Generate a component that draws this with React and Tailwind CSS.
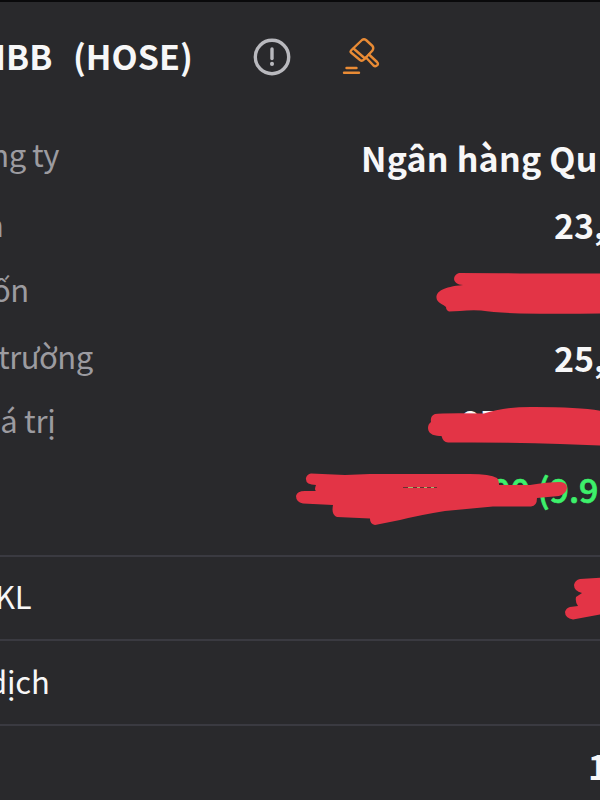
import React from 'react';
import clsx from 'clsx';

const infoRows = [
  {
    label: 'ông ty',
    labelClass: '-ml-[28px] -mt-[3px]',
    value: 'Ngân hàng Qu',
    valueClass: 'w-[239px] mt-px tracking-[0.2px]',
  },
  { label: 'n', labelClass: '-ml-[15px] mt-px', value: '23,', valueClass: 'w-[46px] mt-[2px]' },
  {
    label: 'ốn',
    labelClass: '-ml-[8px]',
    scribble:
      'M459 17 Q500 17 520 17.500 L602 17.500 L602 57.500 Q560 58 520 57.500 Q495 56.500 481 54.500 Q470 54 460 55 L449 55.500 Q446 54 446 51 C443 48 437 47 436.500 42 C436 36 442 31 463 29 C453 29 451 20 459 17 Z',
  },
  { label: 'trường', labelClass: '-ml-[2px] mt-px', value: '25,', valueClass: 'w-[46px] mt-[3px]' },
  {
    label: 'iá trị',
    labelClass: '-ml-[8px] -mt-px tracking-[-0.3px]',
    value: '97',
    valueClass: 'w-[139px] mt-px',
    scribble:
      'M435 26 Q440 25 484 25.500 Q505 18.500 535 19 Q580 19 602 23 L602 57.500 L560 56 Q510 54 448 54.500 Q443 54 441.500 48 C436 48 428 47 428 40 Q428 36 431 34 Q430 28 435 26 Z',
  },
  {
    label: '',
    value: '00 (9.9',
    gain: true,
    valueClass: 'w-[109px] mt-[2px]',
    scribble:
      'M311 19.500 L345 21 L370 20 L470 20 Q490 20 497 24 Q499 26 499 31 L530 31 Q547 28 561 28 Q567 29 567 34 Q566 40 559 42 L537 44 Q537 52 531 52.500 L493 52.500 L445 57 Q420 61 400 66 L375 71 Q370 70 370 65 L370 64.500 L337 63 Q331 61 333 51 L303 49.500 Q296 48 296 42 Q297 37 305 37 L316 37 Q314 36 316 31 Q305 31 306 24 Q307 20 311 19.500 Z',
  },
];

function Scribble({ d, gap }) {
  return (
    <svg className="absolute inset-0 h-full w-full overflow-visible" fill="#e33446" viewBox="0 0 600 66">
      <path d={d} />
      {gap && (
        <>
          <path d="M403 33.500 H437" stroke="#6d2f33" strokeWidth="1" />
          <path d="M408 33.500 H413 M417 33.500 H420 M424 33.500 H427 M431 33.500 H434" stroke="#a8b46c" strokeWidth="1" />
        </>
      )}
    </svg>
  );
}

function InfoRow({ label, labelClass, value, valueClass, gain, scribble }) {
  return (
    <div className="relative flex h-[66px] items-start justify-between leading-[66px] whitespace-nowrap">
      <span className={clsx('text-[31px] text-[#9c9ba0]', label !== 'iá trị' && 'tracking-[-0.5px]', labelClass)}>
        {label}
      </span>
      {value && (
        <span
          className={clsx(
            'text-[34px]',
            gain ? 'font-medium text-[#3df06b] [-webkit-text-stroke:0.7px_#3df06b]' : 'font-bold text-[#f7f7f8]',
            valueClass
          )}
        >
          {value}
        </span>
      )}
      {scribble && <Scribble d={scribble} gap={gain} />}
    </div>
  );
}

function GavelIcon() {
  return (
    <svg width="40" height="42" viewBox="0 0 40 42" fill="none" stroke="#e98b35" strokeWidth="2.400" strokeLinecap="round" strokeLinejoin="round">
      <path d="M11.500 13 L22 3 Q24 1.500 26 3 L32.500 9 Q34 11 32.500 13.500 L24 22.500 Q22 24.500 20 23 L11 15.500 Q10 14.500 11.500 13 Z" />
      <path d="M13.500 11.500 L25 21.500" />
      <path d="M26 20.500 L33.500 28.500 Q35.500 30 37.500 28 Q38.500 26.500 37 25 L29 17.500" />
      <path d="M6.500 31 H16.500 M4 35.800 H19" />
    </svg>
  );
}

export default function App() {
  return (
    <div
      className="h-[800px] w-full overflow-hidden border-t-2 border-[#09090b] bg-[#29292c] text-[#f7f7f8]"
      style={{ fontFamily: '"Noto Sans CJK SC", "Noto Sans", sans-serif' }}
    >
      <header className="flex h-[110px] items-center whitespace-nowrap text-[34px] font-bold">
        <span className="-ml-[23px] w-[96px] -mt-[4px]">MBB</span>
        <span className="w-[180px] -mt-[4px]">(HOSE)</span>
        <svg width="38" height="38" viewBox="0 0 38 38" fill="none" stroke="#b9b9be" strokeWidth="3.400" strokeLinecap="round">
          <circle cx="19" cy="19" r="16.700" />
          <path d="M19 11 V20.500" />
          <path d="M19 25.800 V26" strokeWidth="4" />
        </svg>
        <span className="mt-[2px] ml-[49px]">
          <GavelIcon />
        </span>
      </header>

      <section className="mt-3 h-[431px]">
        {infoRows.map((row, i) => (
          <InfoRow key={i} {...row} />
        ))}
      </section>

      <section className="text-[31px] tracking-[-0.2px] whitespace-nowrap">
        <div className="relative h-[84px] border-t-2 border-[#3a3a41] leading-[77px]">
          <span className="-ml-[5px]">KL</span>
          <svg className="absolute inset-0 h-full w-full" fill="#e33446" viewBox="0 0 600 82">
            <path d="M580 22 L602 20.500 L602 57 L573 62.500 Q565 61 565 55 Q566 51 570 50 L578 49 Q575 45 576 40 L582 36 Q574 34 574 28 Q575 23 580 22 Z" />
          </svg>
        </div>
        <div className="h-[85px] border-t-2 border-[#3a3a41] leading-[80px]">
          <span className="-ml-[12px]">dịch</span>
        </div>
        <div className="flex h-[76px] justify-end border-t-2 border-[#3a3a41] text-[34px] leading-[80px] font-bold">
          <span className="w-[12px]">1</span>
        </div>
      </section>
    </div>
  );
}
